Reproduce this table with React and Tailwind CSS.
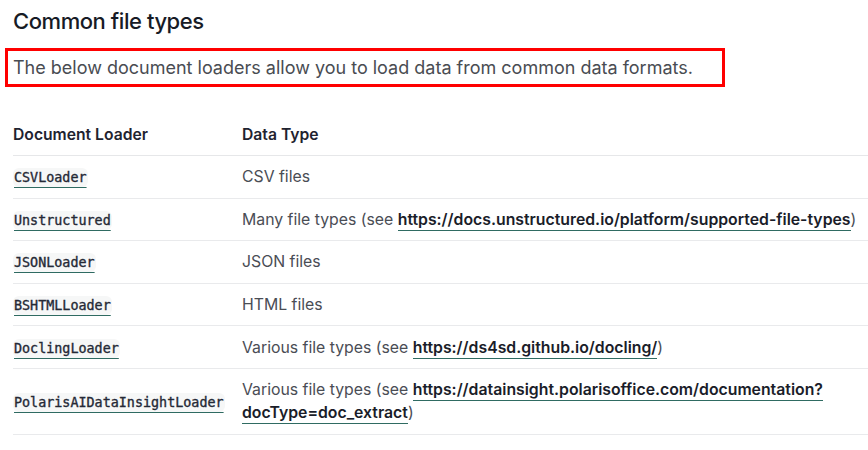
import React from "react";

const rows = [
  { name: "CSVLoader", type: <>CSV files</> },
  {
    name: "Unstructured",
    type: (
      <>
        Many file types (see{" "}
        <Link>https://docs.unstructured.io/platform/supported-file-types</Link>)
      </>
    ),
  },
  { name: "JSONLoader", type: <>JSON files</> },
  { name: "BSHTMLLoader", type: <>HTML files</> },
  {
    name: "DoclingLoader",
    type: (
      <>
        Various file types (see <Link>https://ds4sd.github.io/docling/</Link>)
      </>
    ),
  },
  {
    name: "PolarisAIDataInsightLoader",
    type: (
      <>
        Various file types (see{" "}
        <Link>
          https://datainsight.polarisoffice.com/documentation?
          <wbr />
          docType=doc_extract
        </Link>
        )
      </>
    ),
  },
];

function Link({ children }) {
  return (
    <a className="font-semibold text-[#1a1d29] border-b border-[#2f6b62] pb-[1px]">
      {children}
    </a>
  );
}

function Code({ children }) {
  return (
    <code
      className="bg-[#f6f7f7] rounded-md px-[1px] py-[2px] underline decoration-[#2f6b62] decoration-1 underline-offset-[5px] text-[#252936] text-[13.4px] leading-[20px] [-webkit-text-stroke:0.35px_#252936]"
      style={{ fontFamily: "'DejaVu Sans Mono', monospace" }}
    >
      {children}
    </code>
  );
}

export default function App() {
  return (
    <div
      className="w-[868px] h-[450px] overflow-hidden bg-white px-[13px] pt-[6px]"
      style={{ fontFamily: "Inter, 'Noto Sans', sans-serif" }}
    >
      <h2 className="text-[22px] font-medium tracking-[-0.02em] text-[#171b26] leading-[30px]">
        Common file types
      </h2>
      <div className="mt-[12px] -ml-[8px] w-[720px] border-[3px] border-[#ff0000] pl-[5px] py-[3px]">
        <p className="text-[18px] text-[#494c52] leading-[27px]">
          The below document loaders allow you to load data from common data formats.
        </p>
      </div>

      <table className="mt-[36px] w-[900px] border-collapse text-left">
        <thead>
          <tr className="border-b border-[#e6e7e9]">
            <th className="w-[229px] pb-[9px] text-[15.7px] leading-[23px] font-semibold text-[#1f2330]">
              Document Loader
            </th>
            <th className="pb-[9px] text-[15.7px] leading-[23px] font-semibold text-[#1f2330]">
              Data Type
            </th>
          </tr>
        </thead>
        <tbody>
          {rows.map((r) => (
            <tr key={r.name} className="border-b border-[#e9eaec]">
              <td className="py-[9.3px] leading-[23px] align-middle">
                <Code>{r.name}</Code>
              </td>
              <td className="py-[9.3px] pr-[40px] text-[15.8px] leading-[23px] text-[#4a4d55]">
                {r.type}
              </td>
            </tr>
          ))}
        </tbody>
      </table>
    </div>
  );
}
